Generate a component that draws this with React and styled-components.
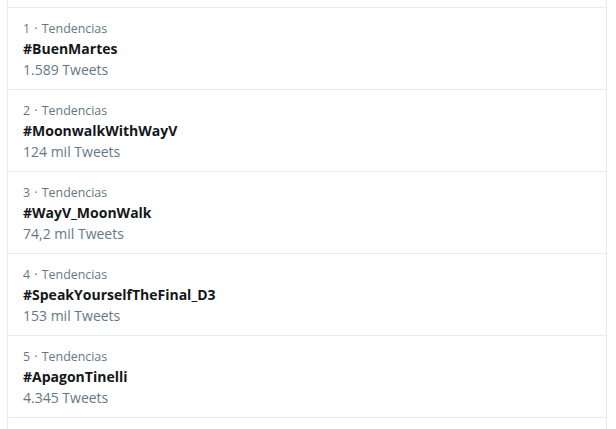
import React from 'react';
import styled, { createGlobalStyle } from 'styled-components';

const GlobalStyle = createGlobalStyle`
  html, body {
    margin: 0;
    padding: 0;
    background: #ffffff;
  }
  body {
    font-family: "Open Sans", "Noto Sans", "Liberation Sans", sans-serif;
    -webkit-font-smoothing: antialiased;
  }
`;

const trends = [
  { rank: 1, name: '#BuenMartes', count: '1.589 Tweets' },
  { rank: 2, name: '#MoonwalkWithWayV', count: '124 mil Tweets' },
  { rank: 3, name: '#WayV_MoonWalk', count: '74,2 mil Tweets' },
  { rank: 4, name: '#SpeakYourselfTheFinal_D3', count: '153 mil Tweets' },
  { rank: 5, name: '#ApagonTinelli', count: '4.345 Tweets' },
];

const Panel = styled.div`
  margin-left: 7px;
  width: 598px;
  height: 429px;
  border-left: 1px solid #e6ecf0;
  border-right: 1px solid #e6ecf0;
  overflow: hidden;
`;

const Spacer = styled.div`
  height: 7px;
  border-bottom: 1px solid #e6ecf0;
`;

const Item = styled.div`
  padding: 11px 15px 9px;
  border-bottom: 1px solid #e6ecf0;
  display: flex;
  flex-direction: column;
`;

const Meta = styled.div`
  font-size: 12.4px;
  line-height: 20px;
  color: #657786;
  word-spacing: 1px;
`;

const Title = styled.div`
  font-size: 14px;
  line-height: 20px;
  font-weight: 700;
  color: #14171a;
`;

const Count = styled.div`
  font-size: 14px;
  line-height: 21px;
  color: #657786;
`;

const App = () => {
  return (
    <>
      <GlobalStyle />
      <Panel>
        <Spacer />
        {trends.map((t) => (
          <Item key={t.rank}>
            <Meta>{t.rank} · Tendencias</Meta>
            <Title>{t.name}</Title>
            <Count>{t.count}</Count>
          </Item>
        ))}
      </Panel>
    </>
  );
};

export default App;
